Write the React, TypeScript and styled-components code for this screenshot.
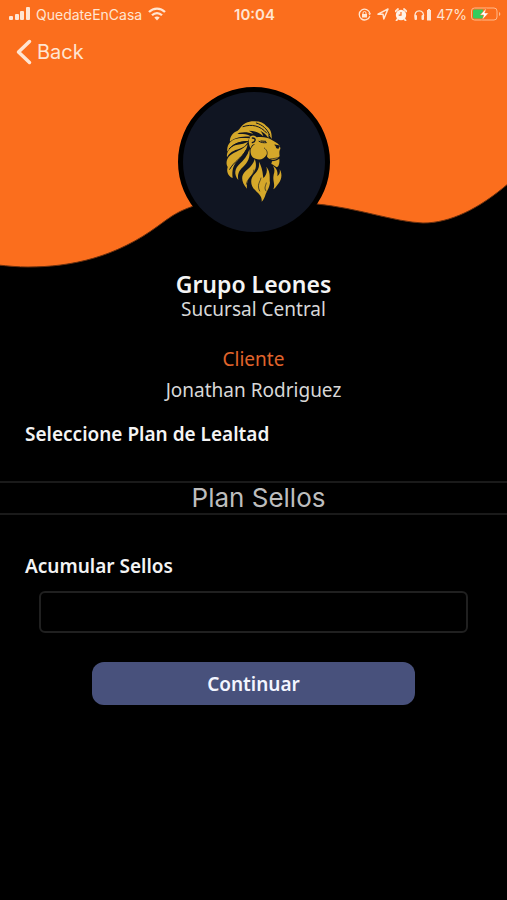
import React from "react";
import styled, { createGlobalStyle } from "styled-components";

const Global = createGlobalStyle`
  *, *::before, *::after { box-sizing: border-box; }
  body { margin: 0; background: #000; color: #f4f4f4; font-family: "Noto Sans", sans-serif; }
`;

const Screen = styled.main`
  display: flex;
  flex-direction: column;
  min-height: 100vh;
`;

const Hero = styled.header`
  display: grid;
  > * { grid-area: 1 / 1; }
`;

const Wave = styled.svg`
  display: block;
  width: 100%;
  height: 268px;
`;

const HeroContent = styled.div`
  display: flex;
  flex-direction: column;
  z-index: 1;
  color: #ffe5d2;
  font-family: Inter, sans-serif;
`;

const StatusBar = styled.div`
  display: grid;
  grid-template-columns: 1fr auto 1fr;
  align-items: center;
  height: 28px;
  padding: 0 6px 0 8px;
  font-size: 14px;
`;

const StatusGroup = styled.div<{ $end?: boolean }>`
  display: flex;
  align-items: center;
  justify-content: ${(p) => (p.$end ? "flex-end" : "flex-start")};
  gap: ${(p) => (p.$end ? "4px" : "6px")};
  white-space: nowrap;
`;

const StatusIcons = styled.div`
  display: flex;
  align-items: center;
  gap: 6px;
`;

const Clock = styled.time`
  font-weight: 600;
  font-size: 15px;
`;

const Glyph = styled.svg`
  display: block;
  flex: none;
`;

const BackButton = styled.button`
  display: flex;
  align-items: center;
  align-self: flex-start;
  gap: 5px;
  height: 48px;
  padding: 0 16px;
  border: 0;
  background: none;
  color: inherit;
  font: 400 20px/28px Inter, sans-serif;
`;

const Avatar = styled.div`
  display: grid;
  place-items: center;
  align-self: center;
  width: 152px;
  height: 150px;
  margin-top: 11px;
  border: 5px solid #000;
  border-radius: 50%;
  background: #101522;
`;

const Profile = styled.section`
  display: flex;
  flex-direction: column;
  align-items: center;
`;

const Company = styled.h1`
  margin: 3px 0 0;
  font-size: 23px;
  line-height: 26px;
  font-weight: 600;
`;

const Line = styled.p<{ $accent?: boolean }>`
  margin: ${(p) => (p.$accent ? "26px 0 7px" : "0")};
  color: ${(p) => (p.$accent ? "#e0642b" : "#d8d8d8")};
  font-size: 19px;
  line-height: 24px;
`;

const Form = styled.form`
  display: flex;
  flex-direction: column;
  margin-top: 19px;
`;

const Label = styled.label`
  padding: 0 25px;
  font-size: 19px;
  line-height: 26px;
  font-weight: 600;
`;

const Picker = styled.select`
  appearance: none;
  width: 100%;
  height: 34px;
  margin: 34px 0 38px;
  padding: 0 0 0 10px;
  border: 2px solid #1a1a1a;
  border-width: 2px 0;
  border-radius: 0;
  background: #000;
  color: #bdbdbd;
  font: 400 26px/30px Inter, sans-serif;
  text-align: center;
  text-align-last: center;
`;

const StampInput = styled.input`
  height: 42px;
  margin: 12px 39px 29px;
  padding: 0 12px;
  border: 2px solid #202020;
  border-radius: 6px;
  background: #000;
  color: #f4f4f4;
  font: 400 19px/26px "Noto Sans", sans-serif;
`;

const Submit = styled.button`
  height: 43px;
  margin: 0 92px;
  border: 0;
  border-radius: 12px;
  background: #48517c;
  color: #f3f5ff;
  font: 600 19px/26px "Noto Sans", sans-serif;
`;

const Signal = () => (
  <Glyph width="22" height="14" viewBox="0 0 22 14" fill="currentColor" aria-hidden="true">
    <rect x="1" y="9" width="4" height="4" rx="1" />
    <rect x="7" y="7" width="4" height="6" rx="1" />
    <rect x="12" y="4" width="4" height="9" rx="1" />
    <rect x="18" y="0" width="4" height="13" rx="1" />
  </Glyph>
);

const Wifi = () => (
  <Glyph width="18" height="14" viewBox="0 0 18 14" fill="none" stroke="currentColor" strokeWidth="2.3" aria-hidden="true">
    <path d="M1 5C5.5.4 12.500.4 17 5M4 8.300c2.900-2.900 7.100-2.900 10 0" />
    <path d="M6.300 10.600c1.600-1.500 3.800-1.500 5.400 0L9 13.500Z" fill="currentColor" stroke="none" />
  </Glyph>
);

const RotationLock = () => (
  <Glyph width="13" height="13" viewBox="0 0 13 13" fill="none" stroke="currentColor" strokeWidth="1.300" aria-hidden="true">
    <path d="M11.800 8.200A5.400 5.400 0 1 1 11.900 5.300" />
    <path d="M10.200 5.200h2.800L11.700 7.500Z" fill="currentColor" stroke="none" />
    <rect x="4" y="6" width="5" height="3.500" fill="currentColor" stroke="none" />
    <path d="M5 6V5a1.500 1.500 0 0 1 3 0v1" strokeWidth="1" />
  </Glyph>
);

const LocationArrow = () => (
  <Glyph width="12" height="12" viewBox="0 0 12 12" fill="none" stroke="currentColor" strokeWidth="1.500" strokeLinejoin="round" aria-hidden="true">
    <path d="M1 6.200 11 1 6.800 11 6 6.200Z" />
  </Glyph>
);

const Alarm = () => (
  <Glyph width="12" height="13" viewBox="0 0 12 13" aria-hidden="true">
    <path d="M.5 3.200 3 1M11.500 3.200 9 1M2.500 11 1.500 12.500M9.500 11l1 1.500" stroke="currentColor" strokeWidth="1.800" strokeLinecap="round" />
    <circle cx="6" cy="7" r="5.200" fill="#fff3e8" />
    <path d="M6 4v3.200H3.700" fill="none" stroke="#fb6e1d" strokeWidth="1.200" />
  </Glyph>
);

const Headphones = () => (
  <Glyph width="19" height="13" viewBox="0 0 19 13" aria-hidden="true">
    <path d="M2.500 10C-1 .5 13.500.5 10 10" fill="none" stroke="currentColor" strokeWidth="1.300" />
    <rect x="1.500" y="7" width="2.500" height="5" rx="1" fill="currentColor" />
    <rect x="8.500" y="7" width="2.500" height="5" rx="1" fill="currentColor" />
    <path d="M14 2h1V1h2v1h1v10.500h-4Z" fill="currentColor" />
  </Glyph>
);

const Battery = () => (
  <Glyph width="30" height="14" viewBox="0 0 30 14" aria-hidden="true">
    <rect x=".5" y="1" width="25.500" height="12" rx="3" fill="none" stroke="#ffb98c" />
    <path d="M28 5v4c1.800-.7 1.800-3.300 0-4Z" fill="#ffb98c" />
    <path d="M3.500 2.500H12v9H3.500a1.500 1.500 0 0 1-1.500-1.500V4a1.500 1.500 0 0 1 1.500-1.500Z" fill="#35cd5c" />
    <path d="M15.500 1 9 8h3.800L11 13.300 17.500 6h-3.700Z" fill="#fff" stroke="#fb6e1d" strokeWidth=".5" />
  </Glyph>
);

const Chevron = () => (
  <Glyph width="16" height="26" viewBox="0 0 16 26" fill="none" stroke="currentColor" strokeWidth="3.500" strokeLinecap="round" strokeLinejoin="round" aria-hidden="true">
    <path d="M13.500 2.500 2.500 13l11 10.500" />
  </Glyph>
);

const Lion = () => (
  <Glyph width="60" height="84" viewBox="42 33 180 252" role="img" aria-label="Grupo Leones">
    <g fill="#d5a82a">
      {/* crest */}
      <path d="M90 58C99 44 116 36 134 37C151 37 162 42 169 51C181 58 186 72 185 90C181 82 178 78 174 74C176 79 176 83 175 87C169 77 161 70 151 65C156 71 159 77 160 82C147 70 132 65 116 65C122 68 127 71 130 75C111 68 92 68 74 77C79 67 87 63 90 58Z" />
      {/* upper back locks */}
      <path d="M60 98C58 84 70 67 86 65C79 74 84 75 94 75C106 74 116 77 123 83C101 82 77 84 60 98Z" />
      <path d="M52 128C50 110 59 97 74 91C88 86 103 87 118 88L114 96C91 96 66 103 52 128Z" />
      {/* side locks */}
      <path d="M51 145C48 127 63 110 83 107C95 105 105 103 114 98C108 109 101 115 89 119C71 124 58 130 51 145Z" />
      <path d="M68 207C53 201 49 187 53 174C47 164 49 149 61 139C75 128 96 124 113 106C109 127 97 141 82 156C70 168 65 184 68 207Z" />
      <path d="M85 213C71 197 74 179 88 166C102 153 113 140 118 121C122 144 113 162 99 174C87 184 82 196 85 213Z" />
      {/* face */}
      <path d="M119 86C123 77 134 78 140 85C151 83 162 84 170 86C180 89 189 94 197 100C206 105 212 112 211 120C207 126 208 135 209 142C203 151 193 155 182 151C174 148 169 143 171 135C162 152 148 154 137 149C125 146 120 134 122 121C124 114 130 109 135 105C127 104 124 112 121 118C116 105 114 92 119 86Z" />
      {/* chin and throat */}
      <path d="M186 157C195 156 202 153 208 149C209 160 208 170 201 175C195 173 189 166 184 165Z" />
      <path d="M111 239C94 221 91 200 107 186C119 176 130 166 134 150C143 171 135 188 123 201C113 212 109 222 111 239Z" />
      <path d="M155 278C157 262 145 254 136 244C120 229 120 209 133 196C144 185 149 174 147 158C157 177 158 190 160 207C169 198 173 187 169 173C184 192 177 209 180 221C178 238 168 250 166 259C163 268 160 274 155 278Z" />
      <path d="M190 241C197 226 187 216 191 197C194 188 195 180 189 170C201 179 204 189 202 202C209 197 211 189 209 181C219 197 214 216 202 228C198 233 195 238 190 241Z" />
    </g>
    <g fill="none" stroke="#101522" strokeLinecap="round">
      <path d="M99 53C125 44 151 50 170 72" strokeWidth="3" />
      <path d="M139 42C157 47 171 59 179 78" strokeWidth="3" />
      <path d="M58 119C75 100 93 99 109 98M59 181C72 157 93 150 108 124M86 204C87 187 106 178 114 165" strokeWidth="3" />
      <path d="M147 97C154 101 161 102 169 101M153 96L167 97" strokeWidth="3" />
      <path d="M195 108L208 111L205 118L199 116" strokeWidth="3" fill="#101522" />
      <path d="M180 150C190 148 200 149 209 144M163 117C170 123 174 129 171 139" strokeWidth="2" />
      <path d="M127 87C135 87 138 92 133 98L127 101" strokeWidth="4" />
      <path d="M109 226C110 209 131 201 132 183M149 246C139 227 151 219 153 207M168 246C161 237 168 229 169 222" strokeWidth="2" />
    </g>
  </Glyph>
);

export default function App() {
  return (
    <>
      <Global />
      <Screen>
        <Hero>
          <Wave viewBox="0 0 507 268" preserveAspectRatio="none" aria-hidden="true">
            <path
              fill="#fb6e1d"
              stroke="#6b300e"
              d="M-2 -2H509V183C479 209 450 223 423 223C395 222 358 208 317 204H200C177 211 172 216 158 226C116 257 72 267 28 267C18 267 8 266 -2 265Z"
            />
          </Wave>
          <HeroContent>
            <StatusBar>
              <StatusGroup>
                <Signal />
                <span>QuedateEnCasa</span>
                <Wifi />
              </StatusGroup>
              <Clock>10:04</Clock>
              <StatusGroup $end>
                <StatusIcons>
                  <RotationLock />
                  <LocationArrow />
                  <Alarm />
                  <Headphones />
                </StatusIcons>
                <span>47%</span>
                <Battery />
              </StatusGroup>
            </StatusBar>
            <BackButton type="button">
              <Chevron />
              Back
            </BackButton>
            <Avatar>
              <Lion />
            </Avatar>
          </HeroContent>
        </Hero>
        <Profile>
          <Company>Grupo Leones</Company>
          <Line>Sucursal Central</Line>
          <Line $accent>Cliente</Line>
          <Line>Jonathan Rodriguez</Line>
        </Profile>
        <Form>
          <Label htmlFor="plan">Seleccione Plan de Lealtad</Label>
          <Picker id="plan">
            <option>Plan Sellos</option>
          </Picker>
          <Label htmlFor="stamps">Acumular Sellos</Label>
          <StampInput id="stamps" type="text" inputMode="numeric" />
          <Submit type="button">Continuar</Submit>
        </Form>
      </Screen>
    </>
  );
}
